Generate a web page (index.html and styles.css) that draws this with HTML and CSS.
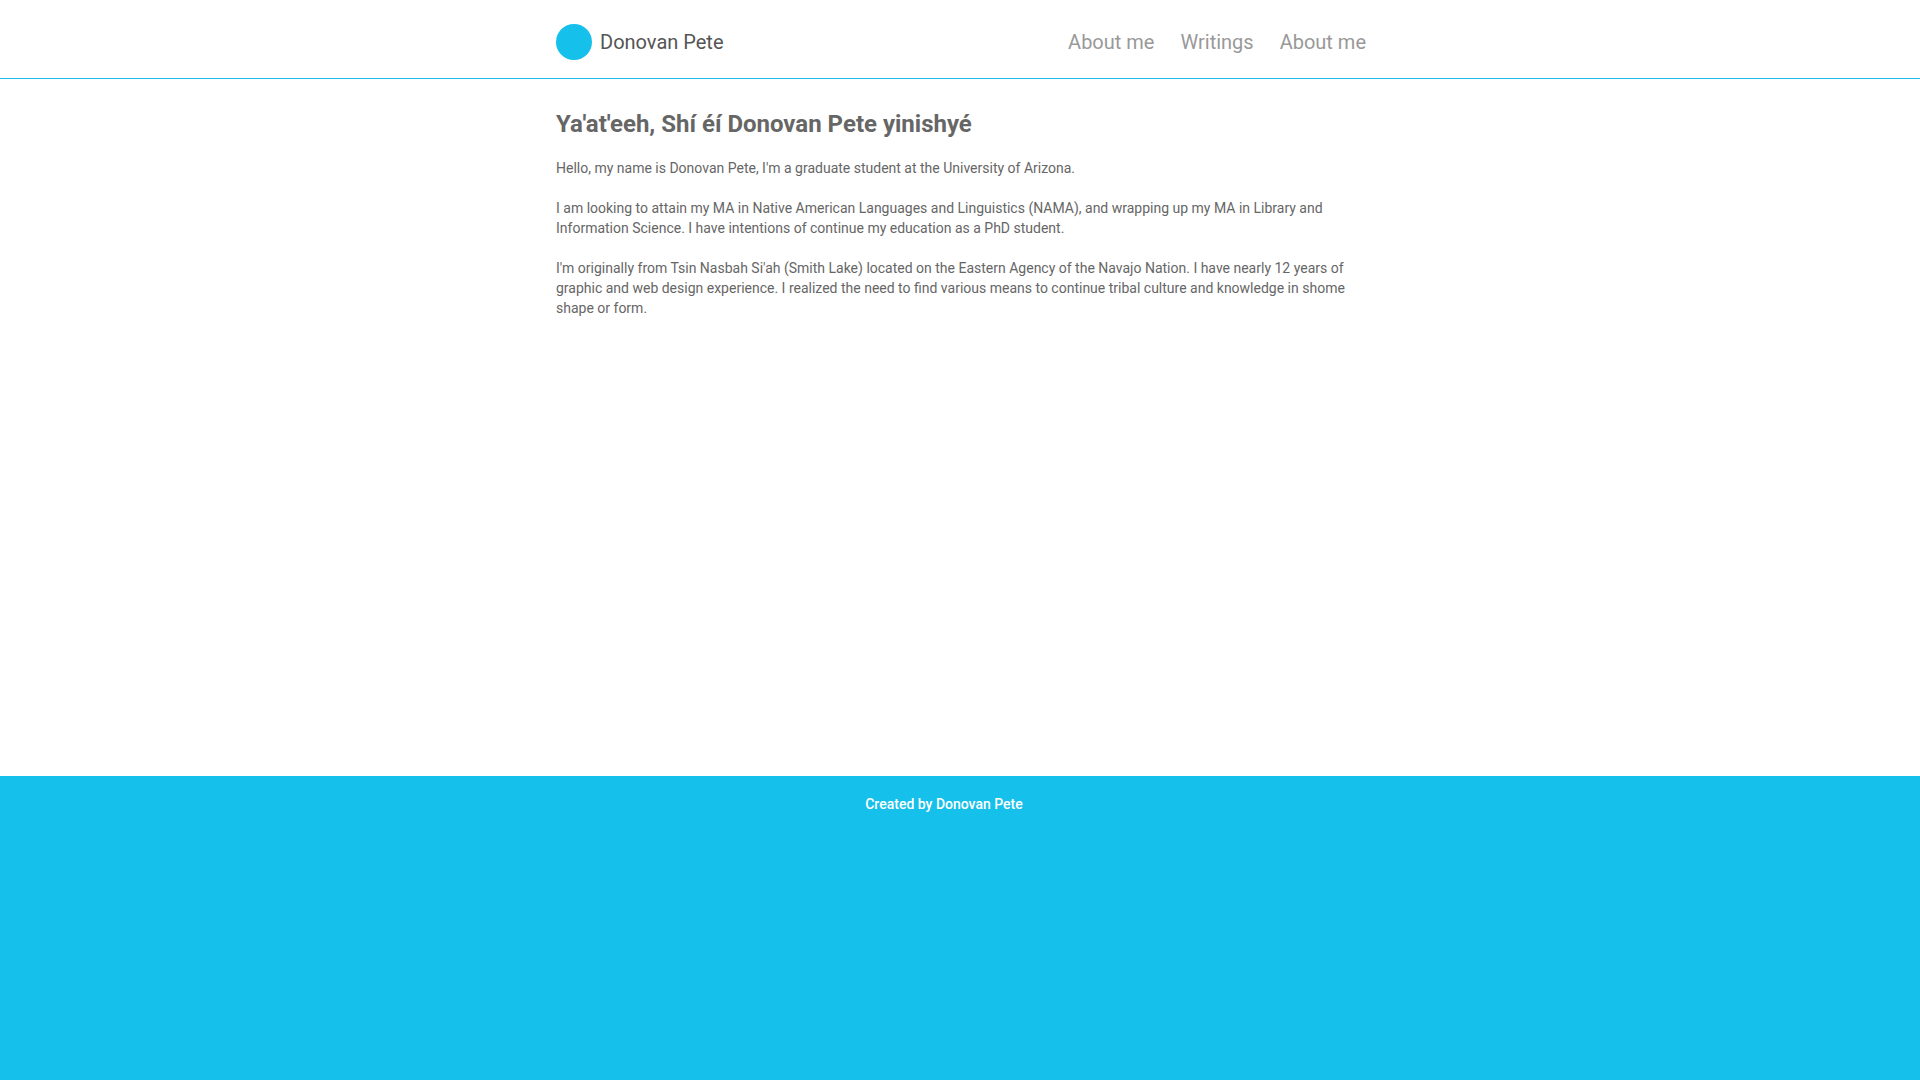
FILE: index.html
```html
<!DOCTYPE html>
<html lang="en">
<head>
<meta charset="utf-8">
<title>Donovan Pete</title>
<link rel="stylesheet" href="styles.css">
</head>
<body>
<header class="site-header">
  <div class="container header-inner">
    <a class="brand" href="#"><span class="brand-logo"></span><span class="brand-name">Donovan Pete</span></a>
    <nav class="nav">
      <a href="#">About me</a>
      <a href="#">Writings</a>
      <a href="#">About me</a>
    </nav>
  </div>
</header>
<main class="main">
  <div class="container">
    <h1 class="title">Ya'at'eeh, Shí éí Donovan Pete yinishyé</h1>
    <p>Hello, my name is Donovan Pete, I'm a graduate student at the University of Arizona.</p>
    <p>I am looking to attain my MA in Native American Languages and Linguistics (NAMA), and wrapping up my MA in Library and Information Science. I have intentions of continue my education as a PhD student.</p>
    <p>I'm originally from Tsin Nasbah Si'ah (Smith Lake) located on the Eastern Agency of the Navajo Nation. I have nearly 12 years of graphic and web design experience. I realized the need to find various means to continue tribal culture and knowledge in shome shape or form.</p>
  </div>
</main>
<footer class="site-footer">
  <div class="container footer-inner">Created by Donovan Pete</div>
</footer>
</body>
</html>
```
FILE: styles.css
```css
* { box-sizing: border-box; }
html, body { margin: 0; padding: 0; height: 100%; }
body {
  font-family: Roboto, "Liberation Sans", sans-serif;
  color: #666;
  background: #15c0ea;
  display: flex;
  flex-direction: column;
  min-height: 100vh;
}
.container {
  width: 812px;
  margin: 0 auto;
  padding-left: 2px;
}
.site-header {
  background: #fff;
  height: 79px;
  border-bottom: 1px solid #15c0ea;
}
.header-inner {
  display: flex;
  align-items: center;
  justify-content: space-between;
  height: 78px;
  padding-top: 6px;
}
.brand {
  display: flex;
  align-items: center;
  text-decoration: none;
}
.brand-logo {
  width: 36px;
  height: 36px;
  border-radius: 50%;
  background: #15c0ea;
  margin-right: 8px;
}
.brand-name {
  font-size: 20px;
  color: #555;
}
.nav {
  display: flex;
  gap: 26px;
}
.nav a {
  font-size: 20px;
  color: #999;
  text-decoration: none;
}
.main {
  background: #fff;
  height: 697px;
  padding-top: 25px;
}
.title {
  font-size: 24px;
  font-weight: 700;
  color: #666;
  margin: 0 0 14px;
  line-height: 40px;
}
.main p {
  font-size: 14px;
  line-height: 20px;
  margin: 0 0 20px;
  color: #666;
}
.site-footer {
  flex: 1;
  background: #15c0ea;
}
.footer-inner {
  text-align: center;
  color: #fff;
  font-size: 14px;
  font-weight: 500;
  padding: 20px 32px 0 0;
}
```
